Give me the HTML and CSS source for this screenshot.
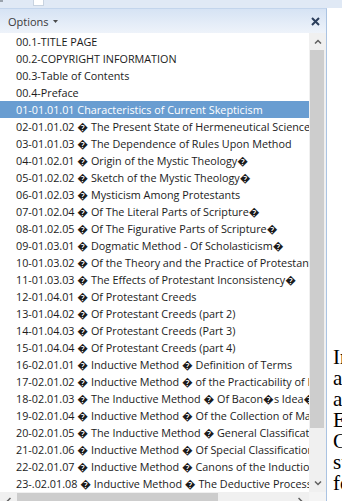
FILE: index.html
```html
<!DOCTYPE html>
<html lang="en">
<head>
    <meta charset="UTF-8">
    <title>Options</title>
    <link rel="stylesheet" href="styles.css">
</head>
<body>
<div class="ribbon">
    <span class="ribbon-grip"></span>
    <span class="ribbon-box"></span>
</div>
<div class="main">
    <div class="pane">
        <div class="pane-head">
            <span class="pane-title">Options
                <svg width="5" height="3" viewBox="0 0 5 3"><path d="M0 0H5L2.5 3Z" fill="#4a4a4a"/></svg>
            </span>
            <svg class="pane-close" width="9" height="9" viewBox="0 0 9 9"><path d="M1 1L8 8M8 1L1 8" stroke="#2b3e5c" stroke-width="2"/></svg>
        </div>
        <div class="pane-body">
            <ul class="toc">
                <li>00.1-TITLE PAGE</li>
                <li>00.2-COPYRIGHT INFORMATION</li>
                <li>00.3-Table of Contents</li>
                <li>00.4-Preface</li>
                <li class="active">01-01.01.01 Characteristics of Current Skepticism</li>
                <li>02-01.01.02 &#xFFFD; The Present State of Hermeneutical Science</li>
                <li>03-01.01.03 &#xFFFD; The Dependence of Rules Upon Method</li>
                <li>04-01.02.01 &#xFFFD; Origin of the Mystic Theology&#xFFFD;</li>
                <li>05-01.02.02 &#xFFFD; Sketch of the Mystic Theology&#xFFFD;</li>
                <li>06-01.02.03 &#xFFFD; Mysticism Among Protestants</li>
                <li>07-01.02.04 &#xFFFD; Of The Literal Parts of Scripture&#xFFFD;</li>
                <li>08-01.02.05 &#xFFFD; Of The Figurative Parts of Scripture&#xFFFD;</li>
                <li>09-01.03.01 &#xFFFD; Dogmatic Method - Of Scholasticism&#xFFFD;</li>
                <li>10-01.03.02 &#xFFFD; Of the Theory and the Practice of Protestantism</li>
                <li>11-01.03.03 &#xFFFD; The Effects of Protestant Inconsistency&#xFFFD;</li>
                <li>12-01.04.01 &#xFFFD; Of Protestant Creeds</li>
                <li>13-01.04.02 &#xFFFD; Of Protestant Creeds (part 2)</li>
                <li>14-01.04.03 &#xFFFD; Of Protestant Creeds (Part 3)</li>
                <li>15-01.04.04 &#xFFFD; Of Protestant Creeds (part 4)</li>
                <li>16-02.01.01 &#xFFFD; Inductive Method &#xFFFD; Definition of Terms</li>
                <li>17-02.01.02 &#xFFFD; Inductive Method &#xFFFD; of the Practicability of Induction</li>
                <li>18-02.01.03 &#xFFFD; The Inductive Method &#xFFFD; Of Bacon&#xFFFD;s Idea&#xFFFD;</li>
                <li>19-02.01.04 &#xFFFD; Inductive Method &#xFFFD; Of the Collection of Materials</li>
                <li>20-02.01.05 &#xFFFD; The Inductive Method &#xFFFD; General Classification</li>
                <li>21-02.01.06 &#xFFFD; Inductive Method &#xFFFD; Of Special Classification</li>
                <li>22-02.01.07 &#xFFFD; Inductive Method &#xFFFD; Canons of the Induction</li>
                <li>23-.02.01.08 &#xFFFD; Inductive Method &#xFFFD; The Deductive Process</li>
            </ul>
            <div class="vscroll">
                <span class="sb-btn"><svg width="8" height="5" viewBox="0 0 8 5"><path d="M1 4.5L4 1.5L7 4.5" fill="none" stroke="#606060" stroke-width="1.5"/></svg></span>
                <span class="thumb"></span>
                <span class="track"></span>
                <span class="sb-btn"><svg width="8" height="5" viewBox="0 0 8 5"><path d="M1 0.5L4 3.5L7 0.5" fill="none" stroke="#606060" stroke-width="1.5"/></svg></span>
            </div>
            <div class="hscroll">
                <span class="sb-btn"><svg width="5" height="8" viewBox="0 0 5 8"><path d="M4.5 1L1.5 4L4.5 7" fill="none" stroke="#606060" stroke-width="1.5"/></svg></span>
                <span class="thumb"></span>
                <span class="track"></span>
                <span class="sb-btn"><svg width="5" height="8" viewBox="0 0 5 8"><path d="M0.5 1L3.5 4L0.5 7" fill="none" stroke="#606060" stroke-width="1.5"/></svg></span>
            </div>
            <div class="corner"></div>
        </div>
    </div>
    <div class="doc">
        <p>In the preceding chapters we have seen<br>
            a view of the principles which govern<br>
            and direct the sound interpreter of Scripture<br>
            Exegesis, properly so called, is the<br>
            Criticism of the sacred text itself<br>
            such as may be applied<br>
            for the establishment of its meaning</p>
    </div>
</div>
</body>
</html>
```

FILE: styles.css
```css
* {
    margin: 0;
    padding: 0;
    box-sizing: border-box;
}

html, body {
    width: 342px;
    height: 501px;
    overflow: hidden;
    background: #fff;
}

body {
    font-family: "Open Sans", "Noto Sans", sans-serif;
}

.ribbon {
    display: flex;
    align-items: flex-start;
    height: 8px;
    background: #e0e9f5;
}

.ribbon-grip {
    width: 3px;
    height: 2px;
    background: #9aa3ad;
}

.ribbon-box {
    width: 11px;
    height: 6px;
    margin-left: 30px;
    background: #fff;
    border: 1px solid #c8d3e0;
    border-top: 0;
}

.main {
    display: flex;
    align-items: flex-start;
}

.pane {
    flex: none;
    width: 327px;
    border-top: 1px solid #c3d5ec;
    border-right: 1px solid #aac3e2;
}

.pane-head {
    display: flex;
    align-items: center;
    justify-content: space-between;
    height: 24px;
    padding: 0 6px 0 8px;
    background: linear-gradient(#d6e3f4, #eef3fa);
}

.pane-title {
    display: flex;
    align-items: center;
    gap: 4px;
    font-size: 11px;
    color: #3a3a3a;
}

.pane-body {
    display: grid;
    grid-template-columns: 309px 17px;
    grid-template-rows: 459px 17px;
}

.toc {
    list-style: none;
    overflow: hidden;
    background: #fff;
}

.toc li {
    height: 17px;
    padding-left: 16px;
    font-size: 10.8px;
    line-height: 17px;
    white-space: nowrap;
    color: #1b1b1b;
}

.toc li.active {
    background: #699dd1;
    color: #fff;
}

.vscroll {
    display: flex;
    flex-direction: column;
    background: #f0f0f0;
}

.sb-btn {
    display: flex;
    flex: none;
    align-items: center;
    justify-content: center;
    width: 17px;
    height: 17px;
}

.vscroll .thumb {
    height: 378px;
    margin: 0 2px 0 1px;
    background: #cdcdcd;
}

.vscroll .track {
    flex: 1;
}

.hscroll {
    display: flex;
    background: #f0f0f0;
}

.hscroll .thumb {
    width: 201px;
    margin: 1px 0 2px;
    background: #cdcdcd;
}

.hscroll .track {
    flex: 1;
}

.corner {
    background: #f4f4f4;
}

.doc {
    padding: 339px 0 0 6px;
    font-family: "Liberation Serif", serif;
    font-size: 21px;
    line-height: 21px;
    white-space: nowrap;
    color: #000;
}
```
